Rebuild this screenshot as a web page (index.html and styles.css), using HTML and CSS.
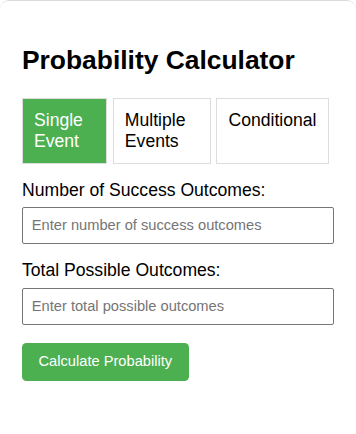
FILE: index.html
```html
<!DOCTYPE html>
<html lang="en">
<head>
<meta charset="utf-8">
<title>Probability Calculator</title>
<link rel="stylesheet" href="styles.css">
</head>
<body>
<div class="container">
  <h2 class="title">Probability Calculator</h2>
  <div class="tabs">
    <div class="tab active">Single Event</div>
    <div class="tab">Multiple Events</div>
    <div class="tab">Conditional</div>
  </div>
  <div class="form-group">
    <label class="label" for="success">Number of Success Outcomes:</label>
    <input class="input" id="success" type="number" placeholder="Enter number of success outcomes">
  </div>
  <div class="form-group">
    <label class="label" for="total">Total Possible Outcomes:</label>
    <input class="input" id="total" type="number" placeholder="Enter total possible outcomes">
  </div>
  <button class="btn" type="button">Calculate Probability</button>
</div>
</body>
</html>
```
FILE: styles.css
```css
html, body {
  margin: 0;
  padding: 0;
  background: #fff;
}
body {
  font-family: "Liberation Sans", Arial, sans-serif;
  color: #000;
}
.container {
  box-sizing: border-box;
  width: 356px;
  min-height: 434px;
  padding: 22px;
  border-top: 1px solid #dcdcdc;
  border-radius: 9px;
}
.title {
  font-size: 26.4px;
  font-weight: bold;
  margin: 21.5px 0 23px;
  line-height: 30.3px;
}
.tabs {
  display: flex;
  margin-bottom: 16px;
}
.tab {
  border: 1.1px solid #ddd;
  padding: 11px;
  margin-right: 5.5px;
  font-size: 17.6px;
  line-height: 20.9px;
  background: #fff;
  color: #000;
}
.tab.active {
  background: #4caf50;
  color: #fff;
}
.form-group {
  margin-bottom: 16.5px;
}
.label {
  display: block;
  font-size: 17.6px;
  line-height: 20.3px;
  margin-bottom: 7px;
}
.input {
  display: block;
  box-sizing: border-box;
  width: 100%;
  height: 37px;
  padding: 0 8.8px;
  border: 1px solid #767676;
  border-radius: 2px;
  font-family: "Liberation Sans", Arial, sans-serif;
  font-size: 14.67px;
  color: #000;
  background: #fff;
}
.input::placeholder {
  color: #757575;
}
.btn {
  display: inline-block;
  background: #4caf50;
  color: #fff;
  border: none;
  border-radius: 4.4px;
  padding: 10.5px 16.5px;
  font-family: "Liberation Sans", Arial, sans-serif;
  font-size: 14.67px;
  line-height: 17px;
  margin-top: 1.5px;
}
```
